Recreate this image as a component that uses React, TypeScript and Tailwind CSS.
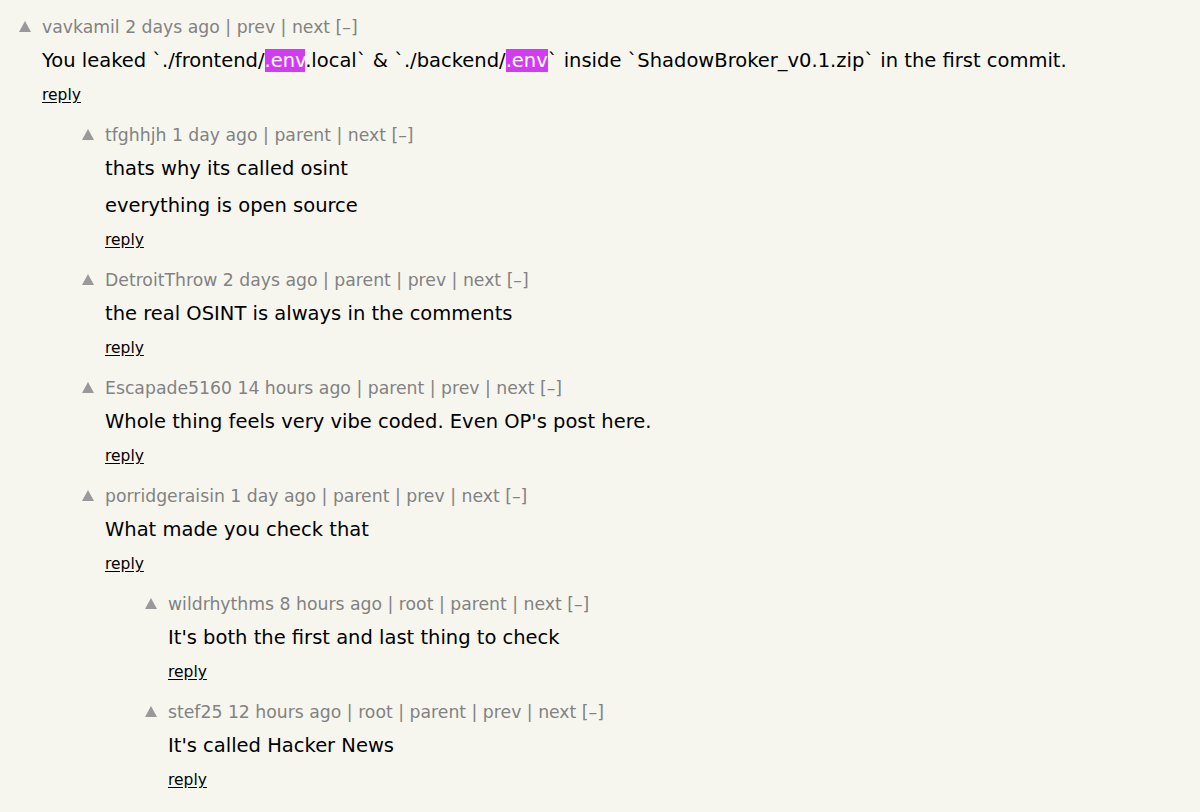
import React from "react";

type C = {
  level: number;
  user: string;
  age: string;
  links: string[];
  paras: React.ReactNode[];
};

const Hl = ({ children }: { children: React.ReactNode }) => (
  <span className="bg-[#d23cf0] text-white">{children}</span>
);

const comments: C[] = [
  {
    level: 0,
    user: "vavkamil",
    age: "2 days ago",
    links: ["prev", "next"],
    paras: [
      <>
        You leaked `./frontend/<Hl>.env</Hl>.local` &amp; `./backend/<Hl>.env</Hl>` inside `ShadowBroker_v0.1.zip` in the first commit.
      </>,
    ],
  },
  {
    level: 1,
    user: "tfghhjh",
    age: "1 day ago",
    links: ["parent", "next"],
    paras: ["thats why its called osint", "everything is open source"],
  },
  {
    level: 1,
    user: "DetroitThrow",
    age: "2 days ago",
    links: ["parent", "prev", "next"],
    paras: ["the real OSINT is always in the comments"],
  },
  {
    level: 1,
    user: "Escapade5160",
    age: "14 hours ago",
    links: ["parent", "prev", "next"],
    paras: ["Whole thing feels very vibe coded. Even OP's post here."],
  },
  {
    level: 1,
    user: "porridgeraisin",
    age: "1 day ago",
    links: ["parent", "prev", "next"],
    paras: ["What made you check that"],
  },
  {
    level: 2,
    user: "wildrhythms",
    age: "8 hours ago",
    links: ["root", "parent", "next"],
    paras: ["It's both the first and last thing to check"],
  },
  {
    level: 2,
    user: "stef25",
    age: "12 hours ago",
    links: ["root", "parent", "prev", "next"],
    paras: ["It's called Hacker News"],
  },
  {
    level: 1,
    user: "hashtag-til",
    age: "1 day ago",
    links: ["parent", "prev", "next"],
    paras: ["Nice catch."],
  },
];

const indentCls = ["pl-0", "pl-[63px]", "pl-[126px]"];

function Comment({ c, first }: { c: C; first: boolean }) {
  return (
    <div className={`${indentCls[c.level]} ${first ? "" : "mt-[18px]"} flex`}>
      <div className="w-[42px] shrink-0 flex justify-start pl-[19px] h-[22px] items-center">
        <svg width="12" height="11" viewBox="0 0 12 11" className="mt-[-1px]">
          <polygon points="6,0 12,11 0,11" fill="#999999" />
        </svg>
      </div>
      <div className="flex flex-col">
        <div className="h-[22px] leading-[22px] text-[17.25px] text-[#828282] whitespace-nowrap">
          {c.user} {c.age}
          {c.links.map((l) => (
            <span key={l}> | {l}</span>
          ))}{" "}
          [–]
        </div>
        {c.paras.map((p, i) => (
          <div
            key={i}
            className={`${i === 0 ? "mt-[11px]" : "mt-[13px]"} h-[24px] leading-[24px] text-[19.5px] text-black whitespace-nowrap`}
          >
            {p}
          </div>
        ))}
        <div className="mt-[11px] h-[22px] leading-[22px] text-[15.5px] text-black">
          <span className="underline underline-offset-2">reply</span>
        </div>
      </div>
    </div>
  );
}

export default function App() {
  return (
    <div
      className="w-[1200px] h-[812px] overflow-hidden bg-[#f6f6ef] pt-[16px]"
      style={{ fontFamily: '"DejaVu Sans", Verdana, sans-serif' }}
    >
      {comments.map((c, i) => (
        <Comment key={i} c={c} first={i === 0} />
      ))}
    </div>
  );
}
